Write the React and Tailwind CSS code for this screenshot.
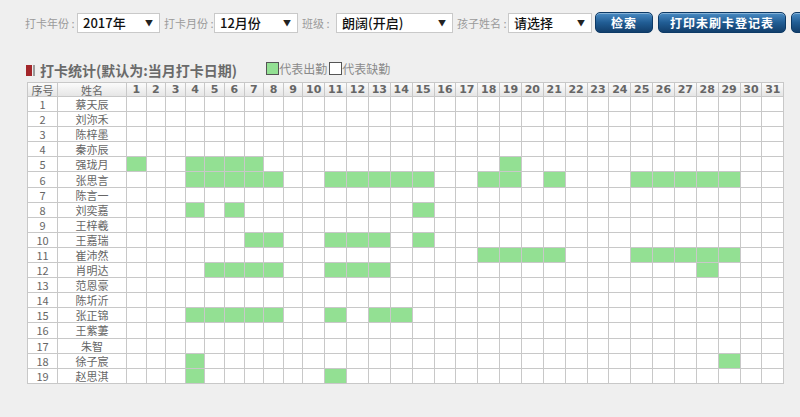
import React from "react";

const names = [
  "蔡天辰", "刘沵禾", "陈梓墨", "秦亦辰", "强珑月", "张思言", "陈言一", "刘奕嘉", "王梓羲", "王嘉瑞",
  "崔沛然", "肖明达", "范恩豪", "陈圻沂", "张正锦", "王紫萋", "朱智", "徐子宸", "赵思淇",
];

// attended days per child (index = row)
const attended = {
  5: [1, 4, 5, 6, 7, 19],
  6: [4, 5, 6, 7, 8, 11, 12, 13, 14, 15, 18, 19, 21, 25, 26, 27, 28, 29],
  8: [4, 6, 15],
  10: [7, 8, 11, 12, 13, 15],
  11: [18, 19, 20, 21, 25, 26, 27, 28, 29],
  12: [5, 6, 7, 8, 11, 12, 13, 28],
  15: [4, 5, 6, 7, 8, 11, 13, 14],
  18: [4, 29],
  19: [4, 11],
};

const days = Array.from({ length: 31 }, (_, i) => i + 1);

const font = { fontFamily: '"Noto Sans CJK SC", "Liberation Sans", sans-serif' };

const Select = ({ value, width }) => (
  <div
    className={`flex shrink-0 items-center justify-between h-[20px] bg-white border border-[#c9c9c9] pl-[5px] pr-[6px] text-[13px] text-[#111] font-medium ${width}`}
  >
    <span className="leading-none">{value}</span>
    <span className="text-[8px] text-[#222]">▼</span>
  </div>
);

const Label = ({ children, width }) => (
  <span className={`shrink-0 text-[11px] leading-[14px] text-[#9a9a9a] ${width}`}>
    {children} :
  </span>
);

const Button = ({ children, width }) => (
  <button
    className={`shrink-0 h-[21px] rounded-[5px] border border-[#0d3a66] bg-gradient-to-b from-[#4a8cc4] via-[#215d94] to-[#123f6c] text-white text-[12px] leading-none font-bold tracking-[1px] shadow-[inset_0_1px_0_rgba(255,255,255,0.35)] ${width}`}
  >
    {children}
  </button>
);

export default function App() {
  return (
    <div className="min-h-screen w-[800px] bg-[#efefef] overflow-hidden" style={font}>
      <div className="flex items-center h-[33px] pt-[12px] pl-[25px] whitespace-nowrap">
        <Label width="w-[52px]">打卡年份</Label>
        <Select value="2017年" width="w-[83px]" />
        <span className="shrink-0 w-[4px]" />
        <Label width="w-[50px]">打卡月份</Label>
        <Select value="12月份" width="w-[84px]" />
        <span className="shrink-0 w-[4px]" />
        <Label width="w-[34px]">班级</Label>
        <Select value="朗阔(开启)" width="w-[117px]" />
        <span className="shrink-0 w-[4px]" />
        <Label width="w-[51px]">孩子姓名</Label>
        <Select value="请选择" width="w-[84px]" />
        <div className="flex shrink-0 gap-[5px] ml-[3px]">
          <Button width="w-[58px]">检索</Button>
          <Button width="w-[128px]">打印未刷卡登记表</Button>
          <Button width="w-[60px]">&nbsp;</Button>
        </div>
      </div>

      <div className="flex items-end pl-[26px] mt-[27px] h-[22px]">
        <span className="w-[6px] h-[11px] bg-[#a3262a] mb-[6px]" />
        <span className="w-[2px] h-[11px] bg-[#9c9c9c] ml-[1px] mb-[6px]" />
        <span className="ml-[5px] text-[14px] font-bold text-[#6a6a6a] leading-none mb-[5px]">
          打卡统计(默认为:当月打卡日期)
        </span>
        <div className="flex items-center ml-[29px] self-start mt-[2px]">
          <span className="w-[13px] h-[13px] bg-[#93e093] border border-[#555]" />
          <span className="text-[12px] text-[#8a8a8a] leading-none">代表出勤</span>
          <span className="w-[13px] h-[13px] bg-white border border-[#555] ml-[2px]" />
          <span className="text-[12px] text-[#8a8a8a] leading-none">代表缺勤</span>
        </div>
      </div>

      <table className="ml-[27px] border-collapse table-fixed w-[757px] text-[#666]">
        <colgroup>
          <col className="w-[30px]" />
          <col className="w-[69px]" />
          {days.map((d) => (
            <col key={d} className={d < 10 ? "w-[19.6px]" : "w-[21.86px]"} />
          ))}
        </colgroup>
        <thead>
          <tr className="h-[14px] bg-gradient-to-b from-[#fbfbfb] to-[#e4e4e4]">
            <th className="border border-[#c8c8c8] text-[11px] font-normal leading-[12px] p-0">序号</th>
            <th className="border border-[#c8c8c8] text-[11px] font-normal leading-[12px] p-0">姓名</th>
            {days.map((d) => (
              <th
                key={d}
                className="border border-[#c8c8c8] text-[11px] font-bold leading-[12px] p-0"
                style={{ fontFamily: '"DejaVu Sans", sans-serif' }}
              >
                {d}
              </th>
            ))}
          </tr>
        </thead>
        <tbody>
          {names.map((name, i) => {
            const row = i + 1;
            const on = attended[row] || [];
            return (
              <tr key={row} className="h-[15.1px] bg-white">
                <td className="border border-[#c8c8c8] text-center text-[11px] leading-[12px] p-0">{row}</td>
                <td className="border border-[#c8c8c8] text-center text-[11px] leading-[12px] p-0">{name}</td>
                {days.map((d) => (
                  <td
                    key={d}
                    className={`border border-[#c8c8c8] p-0 ${on.includes(d) ? "bg-[#93e093]" : ""}`}
                  />
                ))}
              </tr>
            );
          })}
        </tbody>
      </table>
    </div>
  );
}
